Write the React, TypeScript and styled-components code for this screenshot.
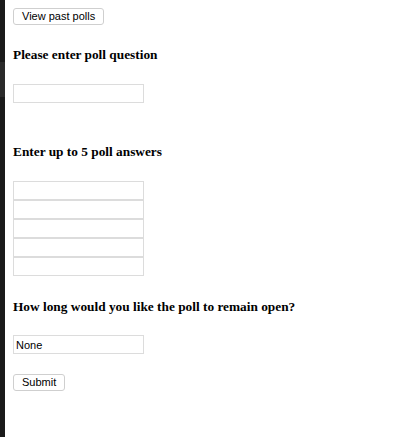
import React from "react";
import styled, { createGlobalStyle } from "styled-components";

const GlobalStyle = createGlobalStyle`
  html, body {
    margin: 0;
    padding: 0;
    background: #ffffff;
  }
  body {
    font-family: "Liberation Serif", "Times New Roman", serif;
    color: #000;
  }
`;

const Page = styled.div`
  display: flex;
  flex-direction: row;
  min-height: 437px;
`;

const SideStrip = styled.div`
  width: 5px;
  flex: 0 0 5px;
  background: #1a1a1a;
  display: flex;
  flex-direction: column;
`;

const StripPatch = styled.div`
  margin-top: 62px;
  height: 35px;
  background: #2a2a2a;
`;

const Main = styled.main`
  flex: 1;
  padding: 8px 8px;
  display: flex;
  flex-direction: column;
  align-items: flex-start;
`;

const Button = styled.button<{ $gap?: number }>`
  margin: ${(p) => p.$gap ?? 0}px 0 0 0;
  height: 17px;
  padding: 0 8px;
  font-family: "Liberation Sans", Arial, sans-serif;
  font-size: 11px;
  line-height: 15px;
  color: #000;
  background: #ffffff;
  border: 1px solid #cfcfcf;
  border-radius: 3px;
  box-sizing: border-box;
`;

const Heading = styled.h4<{ $gap: number }>`
  margin: ${(p) => p.$gap}px 0 0 0;
  font-family: "Liberation Serif", "Times New Roman", serif;
  font-size: 13.33px;
  line-height: 16px;
  font-weight: bold;
`;

const FieldStack = styled.div<{ $gap: number }>`
  margin-top: ${(p) => p.$gap}px;
  display: flex;
  flex-direction: column;
`;

const TextField = styled.input`
  width: 131px;
  height: 19px;
  box-sizing: border-box;
  margin: 0;
  padding: 0 2px;
  font-family: "Liberation Sans", Arial, sans-serif;
  font-size: 11px;
  color: #000;
  background: #fff;
  border: 1px solid #dcdcdc;
  border-radius: 0;
  outline: none;
`;

export default function App() {
  return (
    <>
      <GlobalStyle />
      <Page>
        <SideStrip>
          <StripPatch />
        </SideStrip>
        <Main>
          <Button>View past polls</Button>

          <Heading $gap={22}>Please enter poll question</Heading>
          <FieldStack $gap={21}>
            <TextField type="text" />
          </FieldStack>

          <Heading $gap={41}>Enter up to 5 poll answers</Heading>
          <FieldStack $gap={21}>
            {[0, 1, 2, 3, 4].map((i) => (
              <TextField key={i} type="text" />
            ))}
          </FieldStack>

          <Heading $gap={23}>How long would you like the poll to remain open?</Heading>
          <FieldStack $gap={20}>
            <TextField type="text" defaultValue="None" />
          </FieldStack>

          <Button $gap={20}>Submit</Button>
        </Main>
      </Page>
    </>
  );
}
